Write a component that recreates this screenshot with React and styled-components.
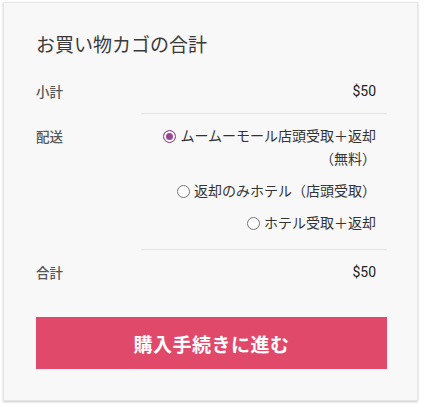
import React from "react";
import styled, { createGlobalStyle } from "styled-components";

const Global = createGlobalStyle`
  html, body { margin: 0; padding: 0; background: #fff; }
  body { font-family: "Noto Sans CJK JP", "Noto Sans", sans-serif; color: #333; }
`;

const Page = styled.div`
  padding: 2px 6px 5px 3px;
`;

const Card = styled.section`
  width: 415px;
  box-sizing: border-box;
  background: #f8f8f8;
  border: 1px solid #e6e6e6;
  box-shadow: 0 1px 2px rgba(0, 0, 0, 0.22);
  padding: 28px 30px 31px 32px;
`;

const Title = styled.h2`
  margin: 0 0 12px;
  font-size: 19px;
  line-height: 26px;
  font-weight: 400;
  color: #3a3a3a;
`;

const Table = styled.div`
  display: grid;
  grid-template-columns: 105px 1fr;
`;

const Label = styled.div`
  padding: 12px 0;
  font-size: 13.5px;
  line-height: 20px;
  font-weight: 500;
  color: #555;
`;

const Value = styled.div`
  border-top: ${(p) => (p.$border ? "1px solid #e4e4e4" : "none")};
  padding: ${(p) => p.$pad || "12px 11px 12px 0"};
  text-align: right;
  font-family: Roboto, "Noto Sans CJK JP", sans-serif;
  font-size: 14px;
  line-height: 20px;
  font-weight: 400;
  color: #222;
`;

const LabelCell = styled(Label)`
  border-top: ${(p) => (p.$border ? "1px solid transparent" : "none")};
`;

const Options = styled.ul`
  list-style: none;
  margin: 0;
  padding: 0;
`;

const Option = styled.li`
  margin: 0 0 9px;
  font-family: "Noto Sans CJK JP", sans-serif;
  font-size: 14px;
  line-height: 23px;
  font-weight: 400;
  color: #333;
  text-align: right;
`;

const Radio = styled.span`
  display: inline-block;
  width: 13px;
  height: 13px;
  box-sizing: border-box;
  border-radius: 50%;
  vertical-align: -2px;
  margin-right: 4px;
  border: 1px solid ${(p) => (p.$checked ? "#9b4596" : "#757575")};
  background: ${(p) => (p.$checked ? "#9b4596" : "#fff")};
  box-shadow: ${(p) => (p.$checked ? "inset 0 0 0 2px #fff" : "none")};
`;

const Checkout = styled.button`
  display: block;
  width: 100%;
  height: 52px;
  margin-top: 23px;
  border: 0;
  background: #e1496b;
  color: #fff;
  font-family: "Noto Sans CJK JP", sans-serif;
  font-size: 19px;
  font-weight: 700;
  letter-spacing: 0.5px;
  cursor: pointer;
`;

export default function App() {
  return (
    <Page>
      <Global />
      <Card>
        <Title>お買い物カゴの合計</Title>
        <Table>
          <LabelCell>小計</LabelCell>
          <Value>$50</Value>
          <LabelCell $border>配送</LabelCell>
          <Value $border $pad="10px 11px 6px 0">
            <Options>
              <Option>
                <Radio $checked />
                ムームーモール店頭受取＋返却
                <br />
                （無料）
              </Option>
              <Option>
                <Radio />
                返却のみホテル（店頭受取）
              </Option>
              <Option>
                <Radio />
                ホテル受取＋返却
              </Option>
            </Options>
          </Value>
          <LabelCell $border>合計</LabelCell>
          <Value $border>$50</Value>
        </Table>
        <Checkout>購入手続きに進む</Checkout>
      </Card>
    </Page>
  );
}
